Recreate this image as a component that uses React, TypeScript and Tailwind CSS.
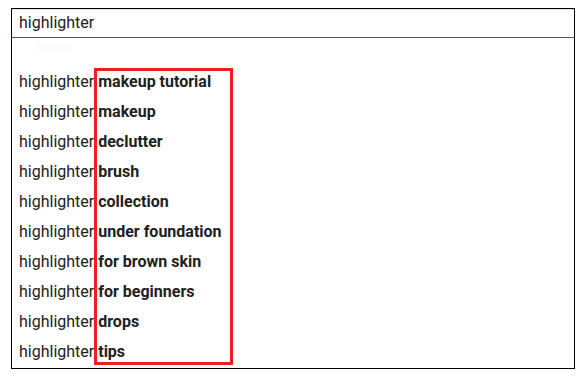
const suggestions = [
  "makeup tutorial",
  "makeup",
  "declutter",
  "brush",
  "collection",
  "under foundation",
  "for brown skin",
  "for beginners",
  "drops",
  "tips",
];

export default function App() {
  return (
    <main className="h-[380px] w-[586px] bg-white pl-[11px] pt-[8px] font-['Roboto',sans-serif] text-[16px] text-[#212121]">
      <div className="relative h-[361px] w-[564px] border border-black">
        <div className="flex h-[29px] items-center border-b border-[#1a5ea8] pl-[7px] shadow-[inset_0_1px_0_#e6e6e6]">
          highlighter
        </div>
        <div className="h-[29px] pl-[24px] pt-[1px] text-[12px] text-[#f8f8f8]">cancel</div>
        <ul>
          {suggestions.map((s) => (
            <li key={s} className="flex h-[30px] items-center pl-[7px]">
              <span>highlighter</span>
              <span className="ml-[4px] font-bold">{s}</span>
            </li>
          ))}
        </ul>
        <div className="absolute left-[82px] top-[59px] h-[297px] w-[139px] border-[3px] border-[#ee1c25]" />
      </div>
    </main>
  );
}
